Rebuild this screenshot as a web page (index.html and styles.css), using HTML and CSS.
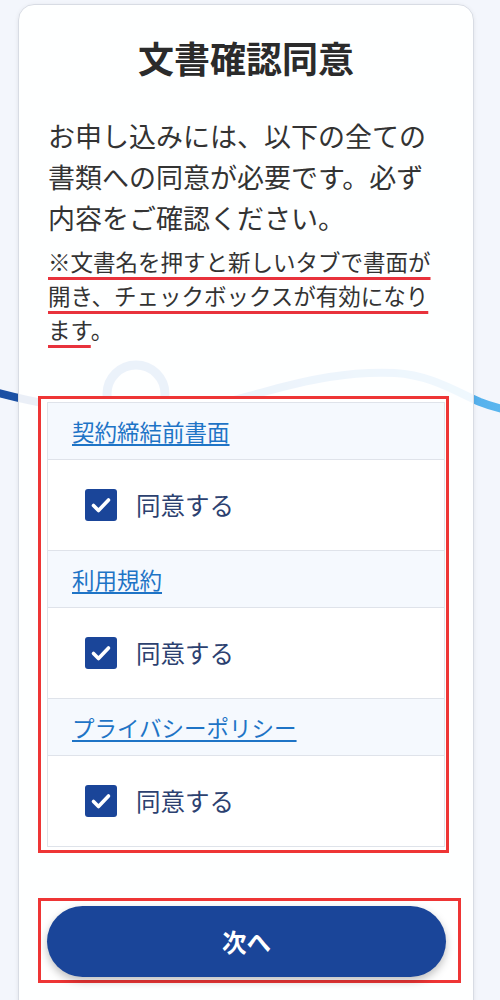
FILE: index.html
```html
<!DOCTYPE html>
<html lang="ja">
<head>
<meta charset="utf-8">
<title>文書確認同意</title>
<link rel="stylesheet" href="styles.css">
</head>
<body>
<svg class="deco" width="500" height="1000" viewBox="0 0 500 1000" aria-hidden="true">
  <defs>
    <linearGradient id="wave" x1="0" y1="0" x2="500" y2="0" gradientUnits="userSpaceOnUse">
      <stop offset="0" stop-color="#1b4fa3"/>
      <stop offset="0.5" stop-color="#2f7fd0"/>
      <stop offset="1" stop-color="#5ab6ef"/>
    </linearGradient>
  </defs>
  <circle cx="136" cy="394" r="29" fill="none" stroke="#2a74c4" stroke-width="9"/>
  <path d="M -20 388 C 20 399, 60 411, 150 411 C 200 411, 230 401, 260 393 C 310 379, 350 371, 395 373 C 430 375, 455 391, 480 402 C 495 408, 505 410, 520 413" fill="none" stroke="url(#wave)" stroke-width="8"/>
</svg>
<main class="card">
  <h1 class="title">文書確認同意</h1>
  <p class="lead">お申し込みには、以下の全ての書類への同意が必要です。必ず内容をご確認ください。</p>
  <p class="note"><span class="mark">※文書名を押すと新しいタブで書面が開き、チェックボックスが有効になります</span>。</p>

  <div class="hl hl-list">
    <div class="docs">
      <div class="doc-head"><a class="doc-link" href="#">契約締結前書面</a></div>
      <label class="doc-body"><span class="check"><svg width="32" height="32" viewBox="0 0 32 32"><path d="M8.5 16.5 L13.5 21.5 L23.5 11" fill="none" stroke="#fff" stroke-width="3.6" stroke-linecap="round" stroke-linejoin="round"/></svg></span><span class="agree">同意する</span></label>
      <div class="doc-head"><a class="doc-link" href="#">利用規約</a></div>
      <label class="doc-body"><span class="check"><svg width="32" height="32" viewBox="0 0 32 32"><path d="M8.5 16.5 L13.5 21.5 L23.5 11" fill="none" stroke="#fff" stroke-width="3.6" stroke-linecap="round" stroke-linejoin="round"/></svg></span><span class="agree">同意する</span></label>
      <div class="doc-head"><a class="doc-link" href="#">プライバシーポリシー</a></div>
      <label class="doc-body last"><span class="check"><svg width="32" height="32" viewBox="0 0 32 32"><path d="M8.5 16.5 L13.5 21.5 L23.5 11" fill="none" stroke="#fff" stroke-width="3.6" stroke-linecap="round" stroke-linejoin="round"/></svg></span><span class="agree">同意する</span></label>
    </div>
  </div>

  <div class="hl hl-btn">
    <button class="next" type="button">次へ</button>
  </div>
</main>
</body>
</html>
```

FILE: styles.css
```css
html, body {
  margin: 0;
  padding: 0;
}
body {
  background: #f3f6fc;
  font-family: "Noto Sans CJK JP", "Noto Sans", sans-serif;
  color: #333333;
  position: relative;
  min-height: 1000px;
  overflow: hidden;
}
.deco {
  position: absolute;
  left: 0;
  top: 0;
  z-index: 0;
}
.card {
  position: relative;
  z-index: 1;
  margin: 4px 26px 0 18px;
  padding: 29px 29px 60px 29px;
  background: rgba(255, 255, 255, 0.91);
  border: 1px solid #d8dce4;
  border-radius: 16px;
  box-shadow: 0 1px 4px rgba(0, 0, 0, 0.08);
}
.title {
  margin: 0 0 34px;
  text-align: center;
  font-size: 36px;
  line-height: 47px;
  font-weight: 700;
  color: #2b2b2b;
}
.lead {
  margin: 0;
  font-size: 27px;
  line-height: 41px;
  color: #333333;
}
.note {
  margin: 6px 0 0;
  font-size: 22.5px;
  line-height: 34px;
  color: #333333;
}
.mark {
  text-decoration: underline;
  text-decoration-color: #e8323c;
  text-decoration-thickness: 3px;
  text-underline-offset: 6px;
}
.hl {
  border: 3px solid #ee3535;
  background: #ffffff;
}
.hl-list {
  margin: 50px -5px 0 -10px;
  padding: 3px 1px 3px 6px;
}
.docs {
  border: 1px solid #dfe3ea;
  background: #ffffff;
}
.doc-head {
  height: 56px;
  display: flex;
  align-items: center;
  padding: 0 24px;
  background: #f5f9fe;
  border-bottom: 1px solid #dfe3ea;
}
.doc-link {
  font-size: 22.5px;
  line-height: 30px;
  color: #1e74c6;
  text-decoration: underline;
  text-decoration-thickness: 1.5px;
  text-underline-offset: 3px;
}
.doc-body {
  height: 90px;
  display: flex;
  align-items: center;
  gap: 19px;
  padding-left: 37px;
  background: #ffffff;
  border-bottom: 1px solid #dfe3ea;
}
.doc-body.last {
  border-bottom: 0;
}
.check {
  width: 32px;
  height: 32px;
  border-radius: 3px;
  background: #1a4599;
  display: flex;
}
.agree {
  font-size: 24.5px;
  line-height: 32px;
  color: #2c4170;
}
.hl-btn {
  margin: 45px -17px 0 -10px;
  padding: 5px 12px 3px 6px;
}
.next {
  display: block;
  width: 100%;
  height: 71px;
  border: 0;
  border-radius: 36px;
  background: #1a4599;
  color: #ffffff;
  font-family: "Noto Sans CJK JP", "Noto Sans", sans-serif;
  font-size: 24.5px;
  font-weight: 700;
  box-shadow: 0 4px 8px rgba(0, 0, 0, 0.25);
  cursor: pointer;
}
```
